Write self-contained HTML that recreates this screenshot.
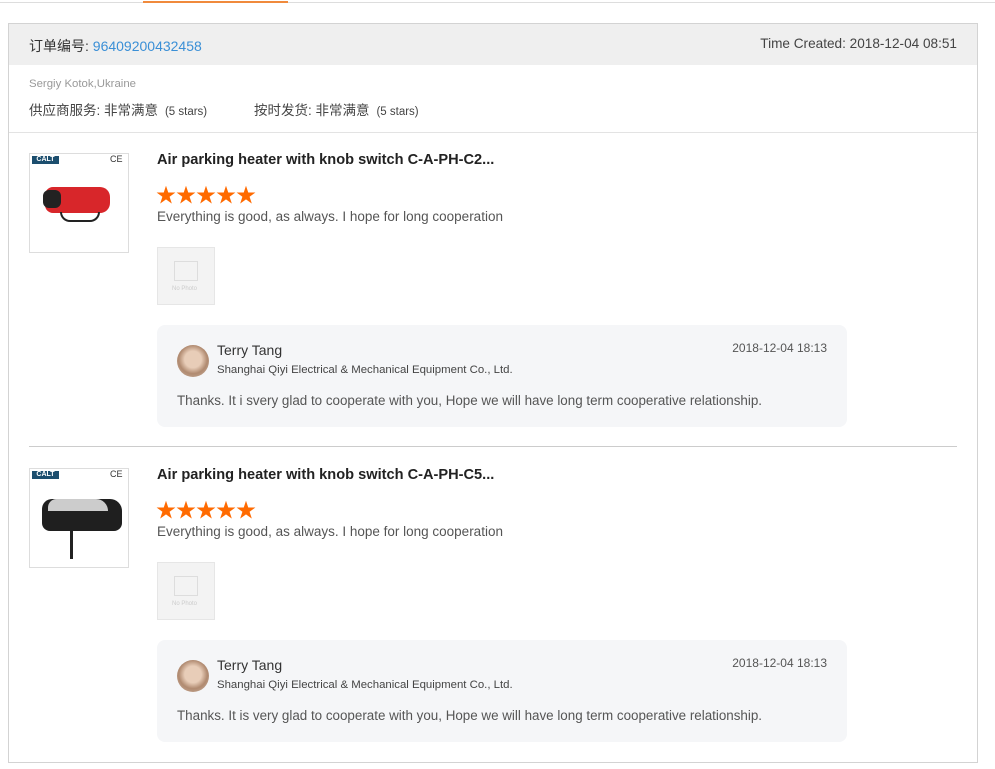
<!DOCTYPE html>
<html><head><meta charset="utf-8"><style>
*{margin:0;padding:0;box-sizing:border-box}
body{width:995px;height:769px;background:#fff;font-family:"Liberation Sans","Noto Sans CJK SC",sans-serif;position:relative;overflow:hidden;color:#333}
.abs{position:absolute}
.t{white-space:nowrap}
.star{color:#ff6a00;font-size:20px;letter-spacing:0px}
.reply{background:#f5f6f8;border-radius:8px;width:690px;height:102px;left:157px}
.av{width:32px;height:32px;border-radius:50%;background:radial-gradient(circle at 50% 45%,#e8cdb8 0 35%,#b08a70 60%,#cdb7a6 100%)}
.nophoto{width:58px;height:58px;border:1px solid #e6e6e6;background:#f3f3f3}
.img{width:100px;height:100px;border:1px solid #ddd;background:#fff}
</style></head><body>
<div class="abs" style="left:0;top:2px;width:995px;height:1px;background:#ddd"></div>
<div class="abs" style="left:143px;top:1px;width:145px;height:2px;background:#f08a3c"></div>
<div class="abs" style="left:8px;top:23px;width:970px;height:740px;border:1px solid #d3d3d3"></div>
<div class="abs" style="left:9px;top:24px;width:968px;height:41px;background:#efefef"></div>
<div class="abs t" style="left:29px;top:36px;font-size:14px;color:#333">订单编号: <span style="color:#3a8fd6">96409200432458</span></div>
<div class="abs t" style="right:38px;top:36px;font-size:13.6px;color:#444">Time Created: 2018-12-04 08:51</div>
<div class="abs t" style="left:29px;top:78px;font-size:11.4px;color:#999">Sergiy Kotok,Ukraine</div>
<div class="abs t" style="left:29px;top:99px;font-size:13.5px;color:#444">供应商服务: 非常满意 <span style="font-size:11.5px">&nbsp;(5 stars)</span></div>
<div class="abs t" style="left:254px;top:99px;font-size:13.5px;color:#444">按时发货: 非常满意 <span style="font-size:11.5px">&nbsp;(5 stars)</span></div>
<div class="abs" style="left:9px;top:132px;width:968px;height:1px;background:#e3e3e3"></div>

<!-- item 1 -->
<div class="abs img" style="left:29px;top:153px">
 <div class="abs" style="left:2px;top:2px;width:27px;height:8px;background:#1c4e6e;color:#fff;font-size:7px;font-weight:bold;line-height:8px;text-align:center">CALT</div>
 <div class="abs" style="left:80px;top:0;font-size:9px">CE</div>
 <div class="abs" style="left:15px;top:33px;width:65px;height:26px;background:#d8262a;border-radius:8px 10px 10px 8px"></div>
 <div class="abs" style="left:13px;top:36px;width:18px;height:18px;background:#222;border-radius:6px"></div>
 <div class="abs" style="left:30px;top:58px;width:40px;height:10px;border:2px solid #222;border-top:none;border-radius:0 0 10px 10px"></div>
</div>
<div class="abs t" style="left:157px;top:152px;font-size:14.6px;font-weight:bold;color:#222">Air parking heater with knob switch C-A-PH-C2...</div>
<div class="abs t star" style="left:156px;top:179px">★★★★★</div>
<div class="abs t" style="left:157px;top:209px;font-size:13.5px;color:#555">Everything is good, as always. I hope for long cooperation</div>
<div class="abs nophoto" style="left:157px;top:247px"><div class="abs" style="left:16px;top:13px;width:24px;height:20px;border:1px solid #ddd"></div><div class="abs t" style="left:14px;top:38px;font-size:6px;color:#ccc">No Photo</div></div>
<div class="abs reply" style="top:325px">
 <div class="abs av" style="left:20px;top:20px"></div>
 <div class="abs t" style="left:60px;top:17px;font-size:14px;color:#333">Terry Tang</div>
 <div class="abs t" style="left:60px;top:39px;font-size:11.4px;color:#444">Shanghai Qiyi Electrical &amp; Mechanical Equipment Co., Ltd.</div>
 <div class="abs t" style="right:20px;top:16px;font-size:12px;color:#555">2018-12-04 18:13</div>
 <div class="abs t" style="left:20px;top:68px;font-size:13.4px;color:#555">Thanks. It i svery glad to cooperate with you, Hope we will have long term cooperative relationship.</div>
</div>
<div class="abs" style="left:29px;top:446px;width:928px;height:1px;background:#ccc"></div>

<!-- item 2 -->
<div class="abs img" style="left:29px;top:468px">
 <div class="abs" style="left:2px;top:2px;width:27px;height:8px;background:#1c4e6e;color:#fff;font-size:7px;font-weight:bold;line-height:8px;text-align:center">CALT</div>
 <div class="abs" style="left:80px;top:0;font-size:9px">CE</div>
 <div class="abs" style="left:12px;top:30px;width:80px;height:32px;background:#1f1f1f;border-radius:10px 12px 8px 8px"></div>
 <div class="abs" style="left:18px;top:30px;width:60px;height:12px;background:#ccc;border-radius:10px 14px 0 0"></div>
 <div class="abs" style="left:40px;top:62px;width:3px;height:28px;background:#222"></div>
</div>
<div class="abs t" style="left:157px;top:467px;font-size:14.6px;font-weight:bold;color:#222">Air parking heater with knob switch C-A-PH-C5...</div>
<div class="abs t star" style="left:156px;top:494px">★★★★★</div>
<div class="abs t" style="left:157px;top:524px;font-size:13.5px;color:#555">Everything is good, as always. I hope for long cooperation</div>
<div class="abs nophoto" style="left:157px;top:562px"><div class="abs" style="left:16px;top:13px;width:24px;height:20px;border:1px solid #ddd"></div><div class="abs t" style="left:14px;top:38px;font-size:6px;color:#ccc">No Photo</div></div>
<div class="abs reply" style="top:640px">
 <div class="abs av" style="left:20px;top:20px"></div>
 <div class="abs t" style="left:60px;top:17px;font-size:14px;color:#333">Terry Tang</div>
 <div class="abs t" style="left:60px;top:39px;font-size:11.4px;color:#444">Shanghai Qiyi Electrical &amp; Mechanical Equipment Co., Ltd.</div>
 <div class="abs t" style="right:20px;top:16px;font-size:12px;color:#555">2018-12-04 18:13</div>
 <div class="abs t" style="left:20px;top:68px;font-size:13.4px;color:#555">Thanks. It is very glad to cooperate with you, Hope we will have long term cooperative relationship.</div>
</div>
</body></html>
